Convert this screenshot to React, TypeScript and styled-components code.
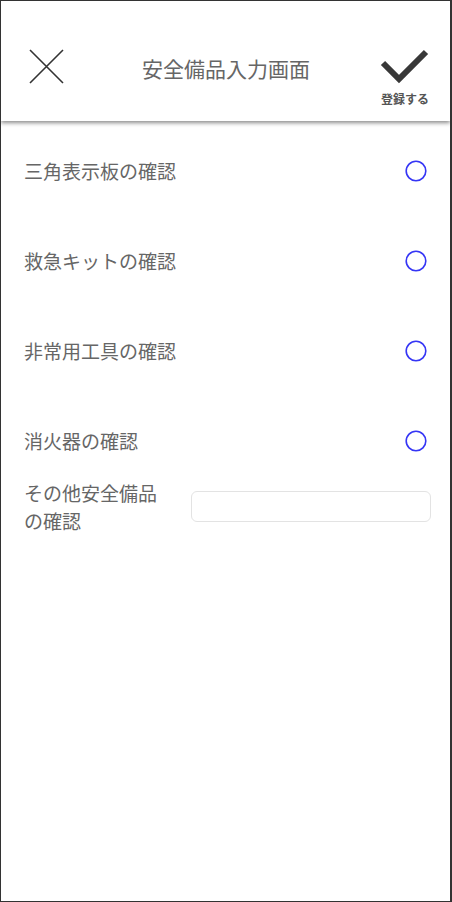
import React, { useState } from "react";
import styled, { createGlobalStyle } from "styled-components";

const items = ["三角表示板の確認", "救急キットの確認", "非常用工具の確認", "消火器の確認"];

const App = () => {
  const [checked, setChecked] = useState<boolean[]>([false, false, false, false]);
  const [other, setOther] = useState("");

  const toggle = (i: number) =>
    setChecked((prev) => prev.map((v, j) => (j === i ? !v : v)));

  return (
    <>
      <GlobalStyle />
      <Frame>
        <Header>
          <IconButton aria-label="close">
            <svg width="35" height="35" viewBox="0 0 35 35">
              <path d="M1 1 L34 34 M34 1 L1 34" stroke="#333" strokeWidth="1.6" fill="none" />
            </svg>
          </IconButton>
          <Title>安全備品入力画面</Title>
          <SaveButton>
            <svg width="50" height="36" viewBox="0 0 50 36">
              <path d="M3 15 L19 31 L46 4" stroke="#383838" strokeWidth="6" fill="none" />
            </svg>
            <SaveLabel>登録する</SaveLabel>
          </SaveButton>
        </Header>
        <List>
          {items.map((label, i) => (
            <Row key={label} space={i === items.length - 1 ? 7 : 30}>
              <Label>{label}</Label>
              <Radio onClick={() => toggle(i)} aria-pressed={checked[i]}>
                <svg width="24" height="24" viewBox="0 0 24 24">
                  <circle cx="12" cy="12" r="9.8" stroke="#3535f5" strokeWidth="1.6" fill="none" />
                  {checked[i] && <circle cx="12" cy="12" r="5" fill="#3535f5" />}
                </svg>
              </Radio>
            </Row>
          ))}
          <OtherRow>
            <Label wrap>その他安全備品の確認</Label>
            <TextInput value={other} onChange={(e) => setOther(e.target.value)} />
          </OtherRow>
        </List>
      </Frame>
    </>
  );
};

export default App;

const GlobalStyle = createGlobalStyle`
  html, body {
    margin: 0;
    padding: 0;
    background: #fff;
  }
  body {
    font-family: "Noto Sans CJK JP", "Noto Sans", sans-serif;
  }
`;

const Frame = styled.div`
  width: 452px;
  height: 902px;
  box-sizing: border-box;
  border: 1px solid #333;
  border-right-width: 2px;
  background: #fff;
  overflow: hidden;
`;

const Header = styled.header`
  height: 120px;
  display: flex;
  align-items: flex-start;
  justify-content: space-between;
  padding: 0 20px 0 28px;
  background: #fff;
  box-shadow: 0 2px 4px rgba(0, 0, 0, 0.45);
  position: relative;
`;

const IconButton = styled.button`
  margin-top: 48px;
  padding: 0;
  border: none;
  background: none;
  line-height: 0;
`;

const Title = styled.h1`
  margin: 52px 0 0 8px;
  font-size: 21px;
  font-weight: 400;
  line-height: 30px;
  color: #666;
`;

const SaveButton = styled.button`
  margin-top: 47px;
  padding: 0;
  border: none;
  background: none;
  display: flex;
  flex-direction: column;
  align-items: center;
  line-height: 0;
`;

const SaveLabel = styled.span`
  margin-top: 6px;
  font-family: "Noto Sans CJK JP", sans-serif;
  font-size: 12px;
  font-weight: 700;
  line-height: 18px;
  color: #555;
`;

const List = styled.div`
  padding: 20px 20px 0 23px;
`;

const Row = styled.div<{ space: number }>`
  height: 60px;
  display: flex;
  align-items: center;
  justify-content: space-between;
  margin-bottom: ${(p) => p.space}px;
`;

const Label = styled.span<{ wrap?: boolean }>`
  font-size: 19px;
  line-height: 28px;
  color: #666;
  width: ${(p) => (p.wrap ? "140px" : "auto")};
`;

const Radio = styled.button`
  padding: 0;
  border: none;
  background: none;
  line-height: 0;
  margin-right: 2px;
  cursor: pointer;
`;

const OtherRow = styled.div`
  display: flex;
  align-items: center;
  justify-content: space-between;
  padding-top: 1px;
`;

const TextInput = styled.input`
  width: 240px;
  height: 31px;
  box-sizing: border-box;
  border: 1px solid #e3e3e3;
  border-radius: 6px;
  outline: none;
  padding: 0 8px;
  font-size: 16px;
  color: #555;
  margin-top: -2px;
  margin-right: -1px;
`;
